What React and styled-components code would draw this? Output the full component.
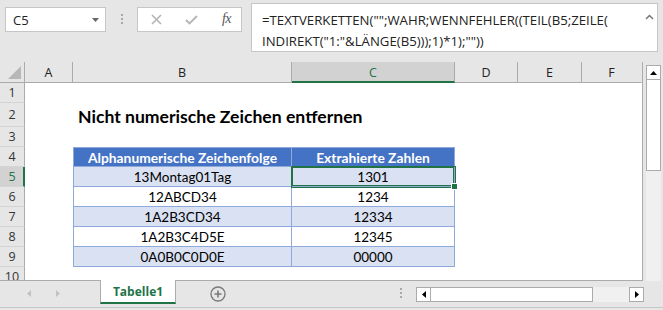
import React from "react";
import styled, { createGlobalStyle, css } from "styled-components";

const GREEN = "#217346";
const UI_FONT = `"Open Sans", "Noto Sans", sans-serif`;
const CELL_FONT = `Lato, "Open Sans", sans-serif`;

const GlobalStyle = createGlobalStyle`
  html, body { margin: 0; padding: 0; background: #e6e6e6; overflow: hidden; }
  * { box-sizing: border-box; }
`;

const Window = styled.div`
  width: 663px;
  height: 310px;
  background: #e6e6e6;
  display: flex;
  flex-direction: column;
  font-family: ${UI_FONT};
  overflow: hidden;
`;

/* ---------- Formula bar ---------- */
const FormulaBar = styled.div`
  height: 62px;
  flex: none;
  display: flex;
  align-items: flex-start;
  padding-left: 5px;
`;

const InputBox = styled.div`
  background: #fff;
  border: 1px solid #c6c6c6;
  height: 25px;
  display: flex;
  align-items: center;
`;

const NameBox = styled(InputBox)`
  margin-top: 7px;
  width: 101px;
  padding: 0 6px 0 7px;
  justify-content: space-between;
  font-size: 13px;
  color: #222;
`;

const Grip = styled.div`
  margin: 14px 0 0 15px;
  width: 2px;
  display: flex;
  flex-direction: column;
  gap: 2px;
  & > i { display: block; width: 2px; height: 2px; background: #a8a8a8; }
`;

const FxBox = styled(InputBox)`
  margin: 7px 0 0 14px;
  width: 105px;
  padding: 0 10px 0 13px;
  justify-content: space-between;
`;

const Fx = styled.span`
  font-family: "Liberation Serif", serif;
  font-style: italic;
  font-size: 14px;
  color: #555;
  letter-spacing: -0.5px;
  margin-top: -2px;
`;

const FormulaInput = styled.div`
  margin: 3px 0 0 9px;
  width: 407px;
  height: 49px;
  background: #fff;
  border: 1px solid #c6c6c6;
  padding: 6px 0 0 10px;
  font-size: 13.2px;
  line-height: 21px;
  color: #222;
  position: relative;
  white-space: pre;
`;

const Collapse = styled.svg`
  position: absolute;
  right: 3px;
  top: 10px;
`;

/* ---------- Sheet ---------- */
const SheetArea = styled.div`
  height: 219px;
  flex: none;
  display: flex;
`;

const Grid = styled.div`
  width: 643px;
  height: 219px;
  overflow: hidden;
  background: #fff;
  border-right: 1px solid #ababab;
  border-bottom: 1px solid #ababab;
  display: grid;
  grid-template-columns: 25px 48px 219px 163px 63px 64px 60px;
  grid-template-rows: 21px 20px 24px repeat(8, 20px);
  align-content: start;
`;

const Corner = styled.div`
  background: #e6e6e6;
  border-right: 1px solid #ababab;
  border-bottom: 1px solid #ababab;
  display: flex;
  align-items: flex-end;
  justify-content: flex-end;
  padding: 0 3px 3px 0;
`;

const ColHead = styled.div`
  background: ${(p) => (p.$sel ? "#d2d2d2" : "#e6e6e6")};
  border-right: 1px solid ${(p) => (p.$last ? "transparent" : "#ababab")};
  border-bottom: ${(p) => (p.$sel ? `2px solid ${GREEN}` : "1px solid #ababab")};
  color: ${(p) => (p.$sel ? GREEN : "#222")};
  font-size: 12.5px;
  display: flex;
  align-items: center;
  justify-content: center;
  padding-top: ${(p) => (p.$sel ? "1px" : "0")};
`;

const RowHead = styled.div`
  background: ${(p) => (p.$sel ? "#d2d2d2" : "#e6e6e6")};
  border-right: ${(p) => (p.$sel ? `2px solid ${GREEN}` : "1px solid #ababab")};
  border-bottom: 1px solid #d4d4d4;
  color: ${(p) => (p.$sel ? GREEN : "#333")};
  font-size: 12.5px;
  display: flex;
  align-items: center;
  justify-content: center;
  padding-left: ${(p) => (p.$sel ? "1px" : "0")};
`;

const Cell = styled.div`
  background: #fff;
`;

const TitleCell = styled.div`
  display: flex;
  align-items: center;
  padding-left: 5px;
  white-space: nowrap;
  font-family: ${CELL_FONT};
  font-weight: 700;
  font-size: 17.6px;
  color: #000;
  overflow: visible;
  position: relative;
  z-index: 1;
  padding-top: 2px;
`;

const TableCell = styled.div`
  display: flex;
  align-items: center;
  justify-content: center;
  font-family: ${CELL_FONT};
  font-size: 13.5px;
  color: #000;
  background: #fff;
  border-right: 1px solid #8eaadb;
  border-bottom: 1px solid #8eaadb;
  position: relative;
  ${(p) => p.$first && css`border-left: 1px solid #8eaadb;`}
  ${(p) => p.$alt && css`background: #d9e1f2;`}
  ${(p) =>
    p.$head &&
    css`
      background: #4472c4;
      color: #fff;
      font-weight: 700;
      font-size: 13.8px;
      border-top: 1px solid #8eaadb;
      border-right-color: #8eaadb;
    `}
  ${(p) =>
    p.$sel &&
    css`
      z-index: 2;
      box-shadow: 0 0 0 1px ${GREEN}, inset 0 0 0 1px ${GREEN};
      &::after {
        content: "";
        position: absolute;
        right: -4px;
        bottom: -4px;
        width: 5px;
        height: 5px;
        background: ${GREEN};
        border: 1px solid #fff;
        box-sizing: content-box;
      }
    `}
`;

/* ---------- Vertical scroll ---------- */
const VScroll = styled.div`
  width: 20px;
  height: 219px;
  padding: 3px 2px 0 3px;
  display: flex;
  flex-direction: column;
`;

const ScrollBtn = styled.div`
  width: 15px;
  height: 15px;
  flex: none;
  background: #fff;
  border: 1px solid #ababab;
  display: flex;
  align-items: center;
  justify-content: center;
`;

const VThumb = styled.div`
  height: 91px;
  flex: none;
  background: #fff;
  border: 1px solid #ababab;
  border-top: none;
`;

const VTrack = styled.div`
  flex: 1;
  background: #f0f0f0;
`;

/* ---------- Tab bar ---------- */
const TabBar = styled.div`
  height: 27px;
  flex: none;
  display: flex;
  align-items: flex-start;
  border-bottom: 1px solid #c6c6c6;
`;

const NavArrows = styled.div`
  width: 100px;
  height: 24px;
  display: flex;
  align-items: center;
  padding-left: 26px;
  gap: 23px;
`;

const SheetTab = styled.div`
  width: 76px;
  height: 24px;
  background: #fff;
  border-left: 1px solid #ababab;
  border-right: 1px solid #ababab;
  border-bottom: 2px solid ${GREEN};
  margin-top: -1px;
  display: flex;
  align-items: center;
  justify-content: center;
  color: ${GREEN};
  font-weight: 700;
  font-size: 12px;
  padding-top: 1px;
`;

const AddSheet = styled.svg`
  margin: 5px 0 0 34px;
  flex: none;
`;

const TabGrip = styled(Grip)`
  margin: 7px 0 0 174px;
`;

const HScroll = styled.div`
  margin: 6px 0 0 14px;
  width: 228px;
  height: 15px;
  display: flex;
`;

const HThumb = styled.div`
  width: 162px;
  background: #fff;
  border: 1px solid #ababab;
  border-left: none;
`;

const HTrack = styled.div`
  flex: 1;
  background: #f0f0f0;
`;

const Tri = ({ dir, color = "#000" }) => {
  const pts = {
    up: "0,5 7,5 3.5,1",
    down: "0,1 7,1 3.5,5",
    left: "5,0 5,7 1,3.5",
    right: "1,0 1,7 5,3.5",
  }[dir];
  const w = dir === "up" || dir === "down" ? 7 : 6;
  const h = dir === "up" || dir === "down" ? 6 : 7;
  return (
    <svg width={w} height={h} viewBox={`0 0 ${w} ${h}`}>
      <polygon points={pts} fill={color} />
    </svg>
  );
};

const cols = ["A", "B", "C", "D", "E", "F"];
const data = [
  ["13Montag01Tag", "1301"],
  ["12ABCD34", "1234"],
  ["1A2B3CD34", "12334"],
  ["1A2B3C4D5E", "12345"],
  ["0A0B0C0D0E", "00000"],
];

export default function App() {
  const rows = [];
  for (let r = 1; r <= 10; r++) {
    rows.push(
      <RowHead key={`rh${r}`} $sel={r === 5}>
        {r}
      </RowHead>
    );
    rows.push(<Cell key={`a${r}`} />);
    if (r === 2) {
      rows.push(
        <TitleCell key="title">Nicht numerische Zeichen entfernen</TitleCell>
      );
      rows.push(<Cell key="c2" />);
    } else if (r === 4) {
      rows.push(
        <TableCell key="b4" $head $first>
          Alphanumerische Zeichenfolge
        </TableCell>
      );
      rows.push(
        <TableCell key="c4" $head>
          Extrahierte Zahlen
        </TableCell>
      );
    } else if (r >= 5 && r <= 9) {
      const [b, c] = data[r - 5];
      const alt = r % 2 === 1;
      rows.push(
        <TableCell key={`b${r}`} $first $alt={alt}>
          {b}
        </TableCell>
      );
      rows.push(
        <TableCell key={`c${r}`} $alt={alt} $sel={r === 5}>
          {c}
        </TableCell>
      );
    } else {
      rows.push(<Cell key={`b${r}`} />);
      rows.push(<Cell key={`c${r}`} />);
    }
    rows.push(<Cell key={`d${r}`} />);
    rows.push(<Cell key={`e${r}`} />);
    rows.push(<Cell key={`f${r}`} />);
  }

  return (
    <>
      <GlobalStyle />
      <Window>
        <FormulaBar>
          <NameBox>
            <span>C5</span>
            <Tri dir="down" color="#666" />
          </NameBox>
          <Grip>
            <i />
            <i />
            <i />
          </Grip>
          <FxBox>
            <svg width="11" height="11" viewBox="0 0 11 11">
              <path d="M1 1L10 10M10 1L1 10" stroke="#b4b4b4" strokeWidth="1.6" />
            </svg>
            <svg width="13" height="10" viewBox="0 0 13 10">
              <path d="M1 5L4.5 8.5L12 1" stroke="#b4b4b4" strokeWidth="1.8" fill="none" />
            </svg>
            <Fx>fx</Fx>
          </FxBox>
          <FormulaInput>
            {'=TEXTVERKETTEN("";WAHR;WENNFEHLER((TEIL(B5;ZEILE(\nINDIREKT("1:"&LÄNGE(B5)));1)*1);""))'}
            <Collapse width="9" height="6" viewBox="0 0 9 6">
              <path d="M1 5L4.5 1.5L8 5" stroke="#777" strokeWidth="1.5" fill="none" />
            </Collapse>
          </FormulaInput>
        </FormulaBar>

        <SheetArea>
          <Grid>
            <Corner>
              <svg width="13" height="13" viewBox="0 0 13 13">
                <polygon points="13,0 13,13 0,13" fill="#b7b7b7" />
              </svg>
            </Corner>
            {cols.map((c, i) => (
              <ColHead key={c} $sel={c === "C"} $last={i === cols.length - 1}>
                {c}
              </ColHead>
            ))}
            {rows}
          </Grid>
          <VScroll>
            <ScrollBtn>
              <Tri dir="up" />
            </ScrollBtn>
            <VThumb />
            <VTrack />
          </VScroll>
        </SheetArea>

        <TabBar>
          <NavArrows>
            <Tri dir="left" color="#c2c2c2" />
            <Tri dir="right" color="#c2c2c2" />
          </NavArrows>
          <SheetTab>Tabelle1</SheetTab>
          <AddSheet width="16" height="16" viewBox="0 0 16 16">
            <circle cx="8" cy="8" r="7" stroke="#7a7a7a" strokeWidth="1.3" fill="none" />
            <path d="M8 4.5V11.5M4.5 8H11.5" stroke="#7a7a7a" strokeWidth="1.6" />
          </AddSheet>
          <TabGrip>
            <i />
            <i />
            <i />
          </TabGrip>
          <HScroll>
            <ScrollBtn>
              <Tri dir="left" />
            </ScrollBtn>
            <HThumb />
            <HTrack />
            <ScrollBtn>
              <Tri dir="right" />
            </ScrollBtn>
          </HScroll>
        </TabBar>
      </Window>
    </>
  );
}
